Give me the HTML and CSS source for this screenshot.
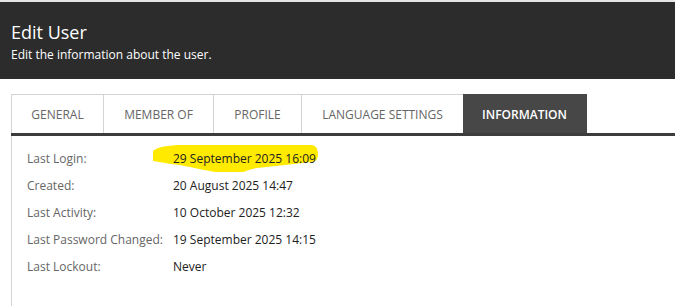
FILE: index.html
```html
<!DOCTYPE html>
<html>
<head>
<meta charset="utf-8">
<link rel="stylesheet" href="styles.css">
</head>
<body>
<div class="topstrip"></div>
<header class="header">
  <h1 class="title">Edit User</h1>
  <p class="subtitle">Edit the information about the user.</p>
</header>
<main class="main">
  <nav class="tabs">
    <div class="tab tab-general">GENERAL</div>
    <div class="tab tab-member">MEMBER OF</div>
    <div class="tab tab-profile">PROFILE</div>
    <div class="tab tab-lang">LANGUAGE SETTINGS</div>
    <div class="tab tab-info active">INFORMATION</div>
  </nav>
  <section class="panel">
    <div class="row row-hl">
      <svg class="highlight" width="166" height="30" viewBox="0 0 166 30"><path d="M0 7 C3 4 10 2 24 1 L158 1 C162 1 165 4 165 10 C165 15 163 18 158 18 L132 21 L104 24 C96 25 94 27 90 28 L62 28 C45 25 30 21 18 20 L0 17 Z" fill="#ffea00"/></svg>
      <span class="label">Last Login:</span><span class="value">29 September 2025 16:09</span>
    </div>
    <div class="row"><span class="label">Created:</span><span class="value">20 August 2025 14:47</span></div>
    <div class="row"><span class="label">Last Activity:</span><span class="value">10 October 2025 12:32</span></div>
    <div class="row"><span class="label">Last Password Changed:</span><span class="value">19 September 2025 14:15</span></div>
    <div class="row"><span class="label">Last Lockout:</span><span class="value">Never</span></div>
  </section>
</main>
</body>
</html>
```
FILE: styles.css
```css
html, body {
  margin: 0;
  padding: 0;
  background: #ffffff;
  font-family: "Open Sans", "Noto Sans", sans-serif;
}
.topstrip {
  height: 2px;
  background: #e6e6e6;
}
.header {
  background: #2c2c2c;
  height: 77px;
  padding: 0 11px;
  box-sizing: border-box;
  color: #ffffff;
  display: flex;
  flex-direction: column;
}
.title {
  margin: 17px 0 0 0;
  font-size: 18px;
  font-weight: 400;
  line-height: 26px;
}
.subtitle {
  margin: 1px 0 0 0;
  font-size: 12px;
  line-height: 18px;
}
.main {
  padding: 15px 0 0 11px;
}
.tabs {
  display: flex;
  height: 39px;
  border-bottom: 3px solid #3c3c3c;
}
.tab {
  box-sizing: border-box;
  height: 39px;
  border-top: 1px solid #d4d4d4;
  border-right: 1px solid #d4d4d4;
  display: flex;
  align-items: center;
  justify-content: center;
  font-size: 12px;
  color: #666666;
}
.tab-general { width: 93px; border-left: 1px solid #d4d4d4; }
.tab-member { width: 110px; }
.tab-profile { width: 88px; }
.tab-lang { width: 161px; border-right: none; }
.tab-info { width: 124px; }
.tab.active {
  background: #474747;
  color: #ffffff;
  font-weight: 600;
  border-color: #474747;
}
.panel {
  border-left: 1px solid #d4d4d4;
  padding: 9px 0 30px 15px;
}
.row {
  display: flex;
  height: 27px;
  align-items: center;
  font-size: 12px;
}
.row-hl {
  position: relative;
}
.highlight {
  position: absolute;
  left: 126px;
  top: -1px;
}
.label {
  width: 146px;
  color: #666666;
}
.value {
  position: relative;
  color: #222222;
}
```
